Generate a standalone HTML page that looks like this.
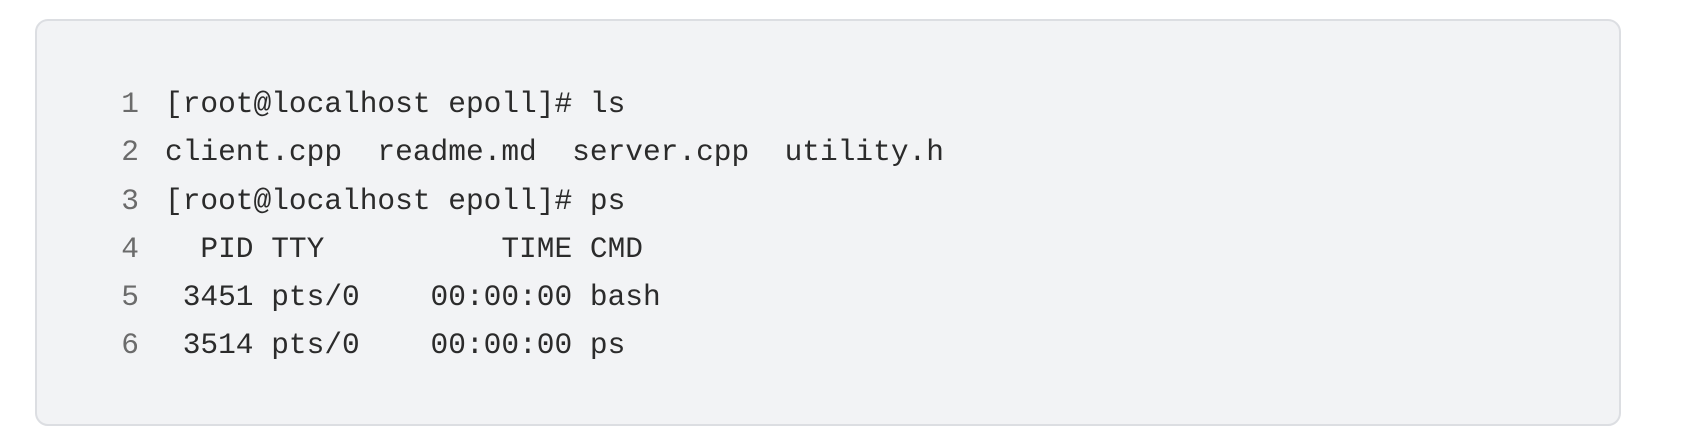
<!DOCTYPE html>
<html><head><style>
html,body{margin:0;padding:0;background:#fff;width:1701px;height:432px;overflow:hidden}
.box{position:absolute;left:35px;top:19px;width:1582px;height:403px;background:#f2f3f5;border:2px solid #dcdee2;border-radius:13px}
.code{position:absolute;left:0;top:59px;font-family:"Liberation Mono",monospace;font-size:29.5px;line-height:48.3px;color:#2b2b2b;white-space:pre}
.ln{display:inline-block;width:102px;text-align:right;color:#6b6b6b;margin-right:26px}
</style></head><body>
<div class="box"><div class="code"><div><span class="ln">1</span>[root@localhost epoll]# ls</div><div><span class="ln">2</span>client.cpp  readme.md  server.cpp  utility.h</div><div><span class="ln">3</span>[root@localhost epoll]# ps</div><div><span class="ln">4</span>  PID TTY          TIME CMD</div><div><span class="ln">5</span> 3451 pts/0    00:00:00 bash</div><div><span class="ln">6</span> 3514 pts/0    00:00:00 ps</div></div></div>
</body></html>
